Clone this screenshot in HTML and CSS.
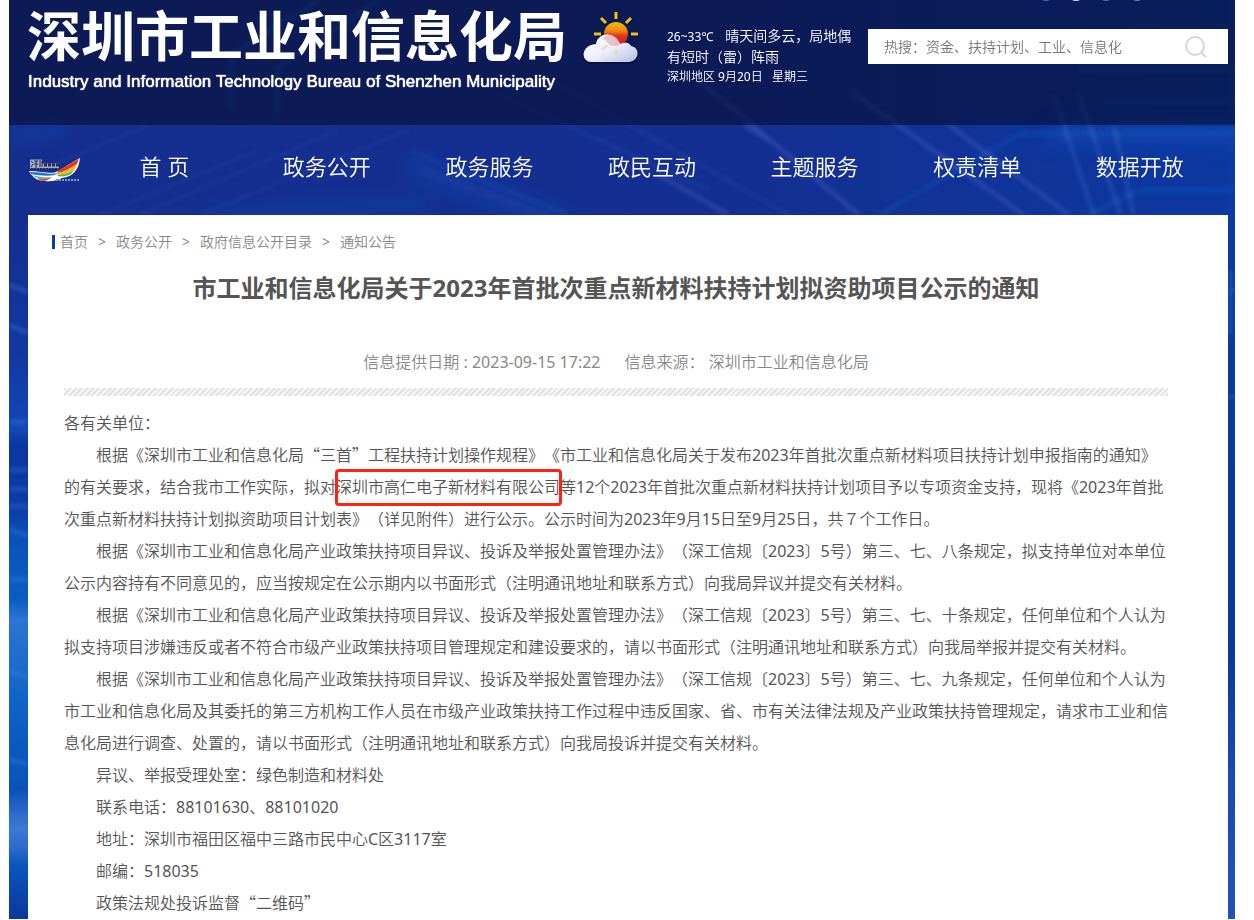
FILE: index.html
```html
<!DOCTYPE html>
<html lang="zh-CN">
<head>
    <meta charset="UTF-8">
    <meta name="viewport" content="width=device-width, initial-scale=1.0">
    <title>深圳市工业和信息化局</title>
    <link rel="stylesheet" href="styles.css">
</head>
<body>
    <div class="page">
        <!-- Background light streaks -->
        <svg class="backdrop" aria-hidden="true">
            <defs>
                <filter id="soft"><feGaussianBlur stdDeviation="2"/></filter>
                <filter id="wide" x="-20%" y="-20%" width="140%" height="140%"><feGaussianBlur stdDeviation="10"/></filter>
            </defs>
            <g fill="none" filter="url(#wide)" stroke="#1d5fd0">
                <path d="M400 165 L560 225" stroke-width="14" opacity=".4"/>
                <path d="M0 138 L60 125" stroke-width="12" opacity=".35"/>
                <path d="M1040 135 H1230" stroke-width="18" opacity=".35"/>
                <path d="M200 215 L420 205" stroke-width="12" opacity=".3"/>
            </g>
            <g fill="none" filter="url(#soft)" stroke-width="3">
                <path d="M222 112 V55 L310 0 M268 118 V68 L370 0" stroke="#0c72c8" opacity=".7"/>
                <path d="M870 215 L1010 134 H1230 M1080 215 L1130 190 H1230 M1070 70 H1230 M1090 102 H1230" stroke="#0d78d8" opacity=".35"/>
                <path d="M690 80 L850 215 M735 125 L760 140 M840 90 L1015 215 M940 125 L1060 215 M650 175 L720 215" stroke="#6f86e8" opacity=".35"/>
                <path d="M1045 95 L1085 215 M1070 95 L1112 215 M1105 125 L1125 215" stroke="#6f9cf0" opacity=".25"/>
                <path d="M90 215 L250 150 M130 215 L330 130 M190 215 L400 130 M20 175 L140 125" stroke="#3b5fd0" opacity=".15"/>
                <path d="M400 150 L560 215 M480 90 L700 190 M550 85 L780 215" stroke="#4a6fe0" opacity=".18"/>
                <path d="M0 285 L19 292 M0 325 L19 333 M0 422 H19 M0 470 H19 M0 489 H19 M0 506 H19 M0 529 L19 536 M0 579 H19 M0 671 L19 677 M0 760 L19 764" stroke="#5b90e8" opacity=".4"/>
                <path d="M1221 270 V335 M1218 290 H1230 M1218 397 H1230" stroke="#1a78e0" opacity=".5"/>
            </g>
        </svg>

        <header class="header">
            <svg class="share-dots" width="100" height="2" viewBox="0 0 100 2" aria-hidden="true">
                <circle cx="6" cy="-7" r="8" fill="#1a7fe0"/>
                <circle cx="36" cy="-7" r="8" fill="#e6e6e6"/>
                <circle cx="66" cy="-7" r="8" fill="#7a5cb0"/>
                <circle cx="97" cy="-7" r="8" fill="#5a9a78"/>
            </svg>
            <a class="brand" href="#">
                <span class="brand-cn">深圳市工业和信息化局</span>
                <span class="brand-en">Industry and Information Technology Bureau of Shenzhen Municipality</span>
            </a>
            <svg class="weather-icon" width="60" height="56" viewBox="0 0 60 56" aria-hidden="true">
                <defs>
                    <linearGradient id="sun" x1="0" y1="0" x2="0" y2="1">
                        <stop offset="0" stop-color="#f0c40c"/>
                        <stop offset=".4" stop-color="#ef7d12"/>
                        <stop offset=".55" stop-color="#e03a1c"/>
                        <stop offset="1" stop-color="#d8142c"/>
                    </linearGradient>
                    <linearGradient id="cloud" x1="0" y1="0" x2="1" y2="1">
                        <stop offset="0" stop-color="#fff"/>
                        <stop offset=".5" stop-color="#eef0fb"/>
                        <stop offset="1" stop-color="#b4bce8"/>
                    </linearGradient>
                </defs>
                <path d="M35 2 V9 M20 8 L25 13 M50 8 L45 13 M13 24 H20 M50 24 H57 M50 40 L45 35" stroke="#0a1030" stroke-width="4" transform="translate(1 1)" opacity=".6"/>
                <path d="M35 2 V9 M20 8 L25 13 M50 8 L45 13 M13 24 H20 M50 24 H57 M50 40 L45 35" stroke="#ecc31a" stroke-width="3"/>
                <circle cx="35" cy="24" r="12" fill="url(#sun)"/>
                <path d="M10 54 C-1 53 0 37 15 36 L40 36 C44 33 49 34 50 37 C61 39 59 53 49 54 Z" fill="#050a28" opacity=".5"/>
                <path d="M10 52 C-1 51 0 35 15 34 C17 22 34 21 39 34 C44 32 48 32 50 36 C60 38 58 51 48 52 Z" fill="url(#cloud)"/>
                <path d="M23 27 C28 24 36 25 39 34 C38 36 35 36 32 36 C28 35 24 31 23 27 Z" fill="#e08c9c" opacity=".5"/>
                <path d="M26 35 L21 40 M35 39 V46" stroke="#e6dcb8" stroke-width="3" opacity=".8"/>
            </svg>
            <div class="weather">
                <p><span class="temp">26~33℃</span>晴天间多云，局地偶有短时（雷）阵雨</p>
                <p class="date">深圳地区 9月20日 &nbsp; 星期三</p>
            </div>
            <form class="search">
                <input type="text" class="search-input" aria-label="搜索" placeholder="热搜：资金、扶持计划、工业、信息化">
                <button type="button" class="search-btn" aria-label="搜索">
                    <svg width="24" height="24" viewBox="0 0 24 24" fill="none" stroke="#d6d6d6" stroke-width="2">
                        <circle cx="11" cy="11" r="9"/>
                        <path d="M17 17 L22 22"/>
                    </svg>
                </button>
            </form>
        </header>

        <nav class="nav">
            <a class="nav-logo" href="#" aria-label="深圳政府在线">
                <svg width="55" height="26" viewBox="0 0 55 26">
                    <path d="M1 14 C14 14 24 18 30 14 C38 10 44 5 52 1 C51 12 45 20 34 21 C30 23 24 25 17 24 C9 24 4 20 1 14 Z" fill="#fff"/>
                    <path d="M31 13 C38 10 45 5 51 2 L49 7 C43 11 36 15 29 16 Z" fill="#e8321e"/>
                    <path d="M29 16 C37 15 44 10 49 7 L47 12 C42 15 37 17 30 18 Z" fill="#f7b51c"/>
                    <path d="M30 18 C38 17 43 15 47 12 L43 17 C39 19 35 20 29 19 Z" fill="#5fb83c"/>
                    <path d="M2 15 C13 15 22 18 30 16 C26 20 14 19 3 17 Z" fill="#1d6fd0"/>
                    <path d="M4 18 C11 20 18 21 24 20 L20 22 C13 22 8 21 4 18 Z" fill="#3fb0a0"/>
                    <path d="M9 21 C14 22 19 22 24 21 L17 24 C13 24 11 23 9 21 Z" fill="#e8502a"/>
                    <g stroke="#c6cce0" stroke-width="9" opacity=".8"><path d="M2 7 H14"/><path d="M14 9 H31" stroke-width="5"/></g>
                    <g stroke="#222b44" fill="none">
                        <path d="M3 4 L5 6 M3 10 L5 7 M6 4 H10 M6 7 H10 M8 4 V11 M12 3 V10 M14 4 V10"/>
                        <path d="M16 8 H31" stroke-width="3" stroke-dasharray="3 1"/>
                        <path d="M3 12 H31" stroke-width="2" stroke-dasharray="2 1"/>
                        <path d="M28 23 H51" stroke="#8b93b4" stroke-width="2" stroke-dasharray="2 1"/>
                    </g>
                </svg>
            </a>
            <a class="nav-item" href="#">首 页</a>
            <a class="nav-item" href="#">政务公开</a>
            <a class="nav-item" href="#">政务服务</a>
            <a class="nav-item" href="#">政民互动</a>
            <a class="nav-item" href="#">主题服务</a>
            <a class="nav-item" href="#">权责清单</a>
            <a class="nav-item" href="#">数据开放</a>
        </nav>

        <main class="panel">
            <div class="crumbs">
                <a href="#">首页</a><span>&gt;</span><a href="#">政务公开</a><span>&gt;</span><a href="#">政府信息公开目录</a><span>&gt;</span><a href="#">通知公告</a>
            </div>
            <h1 class="title">市工业和信息化局关于2023年首批次重点新材料扶持计划拟资助项目公示的通知</h1>
            <div class="meta">
                <span>信息提供日期 : 2023-09-15 17:22</span>
                <span>信息来源： 深圳市工业和信息化局</span>
            </div>
            <div class="stripe"></div>
            <article class="article">
                <p class="no-indent">各有关单位：</p>
                <p>根据《深圳市工业和信息化局<span class="quote">“</span>三首<span class="quote">”</span>工程扶持计划操作规程》《市工业和信息化局关于发布2023年首批次重点新材料项目扶持计划申报指南的通知》的有关要求，结合我市工作实际，拟对<span class="marked">深圳市高仁电子新材料有限公司</span>等12个2023年首批次重点新材料扶持计划项目予以专项资金支持，现将《2023年首批次重点新材料扶持计划拟资助项目计划表》（详见附件）进行公示。公示时间为2023年9月15日至9月25日，共７个工作日。</p>
                <p>根据《深圳市工业和信息化局产业政策扶持项目异议、投诉及举报处置管理办法》（深工信规〔2023〕5号）第三、七、八条规定，拟支持单位对本单位公示内容持有不同意见的，应当按规定在公示期内以书面形式（注明通讯地址和联系方式）向我局异议并提交有关材料。</p>
                <p>根据《深圳市工业和信息化局产业政策扶持项目异议、投诉及举报处置管理办法》（深工信规〔2023〕5号）第三、七、十条规定，任何单位和个人认为拟支持项目涉嫌违反或者不符合市级产业政策扶持项目管理规定和建设要求的，请以书面形式（注明通讯地址和联系方式）向我局举报并提交有关材料。</p>
                <p>根据《深圳市工业和信息化局产业政策扶持项目异议、投诉及举报处置管理办法》（深工信规〔2023〕5号）第三、七、九条规定，任何单位和个人认为市工业和信息化局及其委托的第三方机构工作人员在市级产业政策扶持工作过程中违反国家、省、市有关法律法规及产业政策扶持管理规定，请求市工业和信息化局进行调查、处置的，请以书面形式（注明通讯地址和联系方式）向我局投诉并提交有关材料。</p>
                <p>异议、举报受理处室：绿色制造和材料处</p>
                <p>联系电话：88101630、88101020</p>
                <p>地址：深圳市福田区福中三路市民中心C区3117室</p>
                <p>邮编：518035</p>
                <p>政策法规处投诉监督<span class="quote">“</span>二维码<span class="quote">”</span></p>
            </article>
        </main>
    </div>
</body>
</html>
```

FILE: styles.css
```css
* {
    box-sizing: border-box;
}

body {
    margin: 0;
    padding: 0 19px 0 9px;
    background-color: #fff;
    font-family: "Noto Sans", "Noto Sans CJK SC DemiLight", "Noto Sans CJK SC", sans-serif;
    font-weight: 400;
    text-spacing-trim: space-all;
}

p, h1 {
    margin: 0;
}

a {
    color: inherit;
    text-decoration: none;
}

.page {
    position: relative;
    padding-right: 7px;
    padding-left: 19px;
    background:
        linear-gradient(#0d3aa4 215px, #0a38a0 650px, #1a4ab6 780px, #2450bc) right / 7px 100% no-repeat,
        linear-gradient(#162e8e 215px, #11339a 300px, #1438a4 360px, #1048b6 430px, #0a36a0 445px, #0b3ca8 505px, #0a52ba 540px, #0a5ec4 600px, #2e74d2 620px, #1266c8 690px, #0b5cc2 730px, #0a52b8 790px, #2f6ccc 815px, #3f78d4 830px, #2a68cc 850px, #0a56be 865px, #0a389c) left / 19px 100% no-repeat,
        linear-gradient(90deg, #162e8e, #142f92 60%, #0c38a0);
}

.backdrop {
    position: absolute;
    top: 0;
    left: 0;
    width: 100%;
    height: 100%;
}

/* Header */
.header {
    position: relative;
    display: flex;
    align-items: flex-start;
    height: 125px;
    margin: 0 -7px 0 -19px;
    padding: 0 7px 0 18px;
    background-color: rgba(6, 14, 46, 0.6);
    color: #fff;
}

.share-dots {
    position: absolute;
    top: 0;
    right: 95px;
}

.brand {
    display: flex;
    flex-direction: column;
    width: 540px;
    white-space: nowrap;
}

.brand-cn {
    font-family: "Noto Sans CJK SC", sans-serif;
    font-size: 54px;
    font-weight: 700;
    line-height: 68px;
}

.brand-en {
    padding-left: 1px;
    font-family: "Liberation Sans", Arial, sans-serif;
    font-size: 17px;
    line-height: 28px;
    text-shadow: 0 0 1px #fff, 0 0 1px #fff;
}

.weather-icon {
    margin: 10px 0 0 14px;
}

.weather {
    width: 190px;
    margin: 26px 11px 0 26px;
    font-size: 14px;
    line-height: 20px;
}

.temp {
    margin-right: 12px;
    font-size: 12px;
}

.date {
    font-size: 12px;
}

.search {
    display: flex;
    flex: 1;
    height: 35px;
    margin-top: 29px;
    background-color: #fff;
}

.search-input {
    flex: 1;
    min-width: 0;
    padding: 0 0 0 16px;
    border: none;
    outline: none;
    background: none;
    font: inherit;
    font-size: 14px;
    color: #333;
}

.search-input::placeholder {
    color: #757575;
}

.search-btn {
    display: flex;
    align-items: center;
    justify-content: center;
    width: 64px;
    padding: 0;
    border: none;
    background: none;
    cursor: pointer;
}

/* Navigation */
.nav {
    position: relative;
    display: flex;
    align-items: center;
    height: 90px;
    padding-right: 7px;
    color: #fff;
}

.nav-logo {
    display: flex;
    width: 55px;
}

.nav-item {
    flex: 1;
    padding-bottom: 8px;
    font-size: 22px;
    line-height: 32px;
    text-align: center;
    white-space: nowrap;
}

/* Content */
.panel {
    position: relative;
    padding: 16px 60px 0 36px;
    background-color: #fff;
    color: #555;
}

.crumbs {
    display: flex;
    align-items: center;
    height: 22px;
    margin-left: -12px;
    color: #888;
    font-size: 14px;
    line-height: 14px;
}

.crumbs::before {
    content: "";
    width: 3px;
    height: 14px;
    margin-right: 5px;
    background-color: #0a3ca8;
}

.crumbs span {
    margin: 0 10px;
}

.title {
    margin-top: 17px;
    font-family: "Noto Sans", "Noto Sans CJK SC", sans-serif;
    font-size: 24px;
    font-weight: 700;
    line-height: 36px;
    text-align: center;
}

.meta {
    display: flex;
    justify-content: center;
    gap: 24px;
    margin-top: 44px;
    color: #888;
    font-size: 16px;
    line-height: 24px;
}

.stripe {
    height: 8px;
    margin: 14px 0 11px;
    background: repeating-linear-gradient(135deg, #e2e2e2 0 2px, #f6f6f6 2px 4px);
}

.article {
    font-size: 16px;
    line-height: 32px;
}

.article p {
    text-indent: 2em;
}

.article .no-indent {
    text-indent: 0;
}

.quote {
    font-family: "Noto Sans CJK SC", sans-serif;
    line-height: 16px;
}

.marked {
    position: relative;
    text-indent: 0;
}

.marked::after {
    content: "";
    position: absolute;
    inset: -7px -2px -8px -1px;
    border: 3px solid #fb2312;
    border-radius: 4px;
}
```
